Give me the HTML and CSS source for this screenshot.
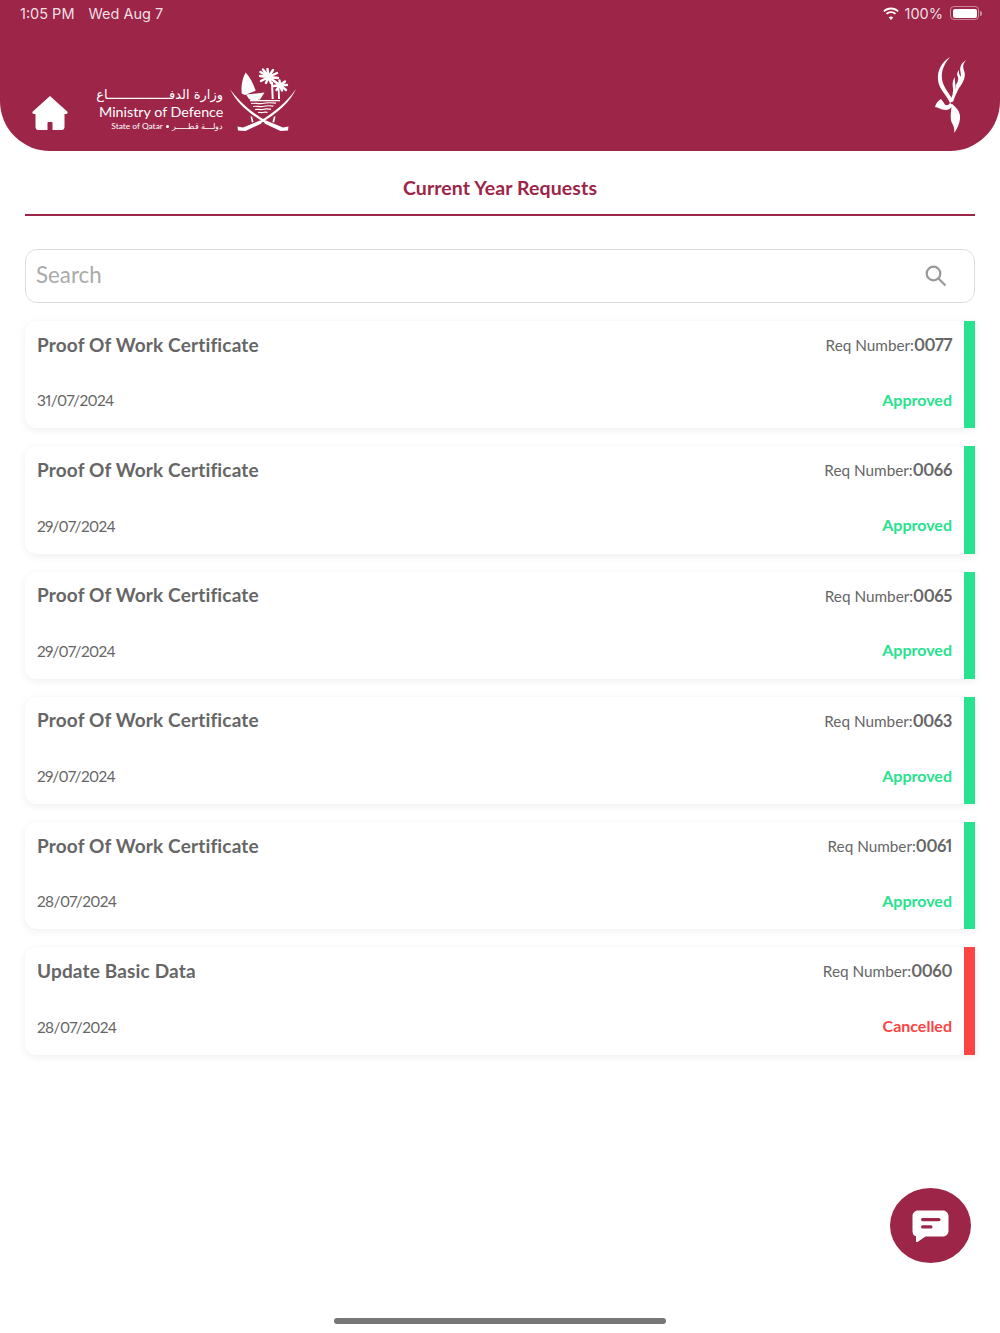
FILE: index.html
```html
<!DOCTYPE html>
<html lang="en">
<head>
<meta charset="utf-8">
<title>Current Year Requests</title>
<link rel="stylesheet" href="styles.css">
</head>
<body>
<div class="page">
  <header class="header">
    <div class="status">
      <div class="status-left"><span>1:05 PM</span><span>Wed Aug 7</span></div>
      <div class="status-right">
        <svg class="wifi" viewBox="0 0 18 13"><path d="M9 2.400c2.500 0 4.800 1 6.500 2.600l1.200-1.300C14.700 1.700 12 .6 9 .6S3.300 1.700 1.300 3.700L2.500 5C4.200 3.400 6.500 2.400 9 2.400z"/><path d="M9 6c1.500 0 2.900.6 3.900 1.500l1.200-1.300C12.800 5 11 4.200 9 4.200S5.200 5 3.900 6.200l1.200 1.300C6.100 6.600 7.500 6 9 6z"/><path d="M9 9.500c-.9 0-1.700.3-2.300.9L9 12.900l2.300-2.500c-.6-.6-1.400-.9-2.300-.9z"/></svg>
        <span>100%</span>
        <span class="battery"><span class="battery-fill"></span></span>
        <span class="battery-cap"></span>
      </div>
    </div>
    <div class="brand-row">
      <svg class="home" viewBox="0 0 36 34"><path d="M18 0 .8 15.500c-.9 1-.3 2.500 1 2.500h1.700v13c0 1.500 1 3 2.500 3h9.500v-7c0-.6.400-1 1-1h3c.6 0 1 .4 1 1v7H30c1.500 0 2.500-1.500 2.500-3V18h1.700c1.300 0 1.900-1.500 1-2.500z"/></svg>
      <div class="logo">
        <div class="logo-text">
          <div class="logo-ar">وزارة الدفــــــــــــــــاع</div>
          <div class="logo-en">Ministry of Defence</div>
          <div class="logo-sub"><span>State of Qatar</span><span class="dot"></span><span dir="rtl">دولــــة قطــــــر</span></div>
        </div>
        <svg class="emblem" viewBox="230 68 66 64">
          <path class="w" d="M245.700 72.500C242 79 241 86 241.700 93.500L245 95 255.700 90.700C253 83 250 77 245.700 72.500z"/>
          <path class="w" d="M246 94.500 264.500 92.500 260 99.500 253 100.700 249 99z"/>
          <path class="w" d="M271 82h2l.7 17h-2zM277.800 88h1.700l.5 11h-2z"/>
          <g class="frond">
            <path d="M268.500 77 260 76M268.500 77 260.500 72M268.500 77 263 69.500M268.500 77 267.500 69M268.500 77 273 70M268.500 77 277 73M268.500 77 278 78M268.500 77 261 81M268.500 77 266 83M268.500 77 271 83M268.500 77 275.500 82"/>
            <path d="M280 85 273.500 86M280 85 274.500 81.500M280 85 279.500 80.500M280 85 285 81.500M280 85 287 85M280 85 286 90M280 85 282 90.500M280 85 276.500 90"/>
          </g>
          <path class="w" d="M250 100h30v1.300h-30z"/>
          <path class="s" d="M251 103.500c4-1 7 .8 11 0s9-1 14-.3"/>
          <path class="s" d="M253 106.500c3.500-1 6.500.8 9.500 0s7-1 11-.3"/>
          <path class="s" d="M255 109.500c3-.8 5 .6 7.500 0s5.500-.8 8.500-.2"/>
          <path class="s" d="M258 112.500c2-.6 3 .5 4.500 0s3-.6 5-.1"/>
          <path class="w" d="M230 89C238 100 250 112 268 122L266.500 124C248 113 236 102 230 89z"/>
          <path class="w" d="M296 89C288 100 276 112 258 122L259.500 124C278 113 290 102 296 89z"/>
          <path class="w" d="M266 120.500 283 127.500 288.500 126.500 288 130.500 280.500 131 264.500 123.500zM260 120.500 243 127.500 237.500 126.500 238 130.500 245.500 131 261.500 123.500z"/>
          <path class="w" d="M250.500 116.500h1.600l1.500 5.500-1.800.4zM275.500 116.500h-1.600l-1.500 5.500 1.800.4z"/>
        </svg>
      </div>
      <svg class="crest" viewBox="935 57 34 76">
        <path class="w" d="M950 57C942 62 937 70 938 80 939 90 947 95 950 103L953 101C950 93 943 88 942 79 941 71 944 64 950 57z"/>
        <path class="w" d="M935 107C936 103 938 101 941 99L944 103C945 106 948 106 950 103L953 105C951 109 948 110 945 110 941 110 938 107 935 107z"/>
        <path class="w" d="M952 104C956 107 961 112 960 119 959 125 957 129 954 133 955 128 953 125 951.500 122 950 118 951 110 952 104z"/>
        <path class="w" d="M966.500 60C962 64 963 68 964.500 72 966 78 962 84 959 88 957 92 955 96 953 102L950.500 100C952 95 955 90 957.500 85 960.500 80 961.500 76 960.500 72 959.500 67 961 63 966.500 60z"/>
        <path class="w" d="M959 70C956.500 73 957 75 958 77 959 80 957 83 955.500 86L957.500 88C961.500 84 962.500 80 961 77 959.500 75 958.500 73 959 70z"/>
        <path class="w" d="M955 77C952 81 952.500 85 953 88 953.300 90 953 92 952.500 94L955 94.500C956.500 90 955.500 87 955.300 84 955.100 81 954.500 79 955 77z"/>
      </svg>
    </div>
  </header>

  <main class="content">
    <h1 class="title">Current Year Requests</h1>
    <div class="search">
      <span class="search-ph">Search</span>
      <svg class="search-icon" viewBox="0 0 22 22"><circle cx="8.500" cy="8.500" r="6.800"/><path d="M13.500 13.500 20.500 20.500"/></svg>
    </div>
    <div class="list">
      <article class="card approved">
        <div class="card-body">
          <div class="row"><span class="name">Proof Of Work Certificate</span><span class="num">Req Number:<b>0077</b></span></div>
          <div class="row"><span class="date">31/07/2024</span><span class="state">Approved</span></div>
        </div>
      </article>
      <article class="card approved">
        <div class="card-body">
          <div class="row"><span class="name">Proof Of Work Certificate</span><span class="num">Req Number:<b>0066</b></span></div>
          <div class="row"><span class="date">29/07/2024</span><span class="state">Approved</span></div>
        </div>
      </article>
      <article class="card approved">
        <div class="card-body">
          <div class="row"><span class="name">Proof Of Work Certificate</span><span class="num">Req Number:<b>0065</b></span></div>
          <div class="row"><span class="date">29/07/2024</span><span class="state">Approved</span></div>
        </div>
      </article>
      <article class="card approved">
        <div class="card-body">
          <div class="row"><span class="name">Proof Of Work Certificate</span><span class="num">Req Number:<b>0063</b></span></div>
          <div class="row"><span class="date">29/07/2024</span><span class="state">Approved</span></div>
        </div>
      </article>
      <article class="card approved">
        <div class="card-body">
          <div class="row"><span class="name">Proof Of Work Certificate</span><span class="num">Req Number:<b>0061</b></span></div>
          <div class="row"><span class="date">28/07/2024</span><span class="state">Approved</span></div>
        </div>
      </article>
      <article class="card cancelled">
        <div class="card-body">
          <div class="row"><span class="name">Update Basic Data</span><span class="num">Req Number:<b>0060</b></span></div>
          <div class="row"><span class="date">28/07/2024</span><span class="state">Cancelled</span></div>
        </div>
      </article>
    </div>
  </main>

  <button class="fab" type="button" aria-label="Chat">
    <svg viewBox="0 0 37 32"><path class="w" d="M6 .5h25c3 0 5.500 2.500 5.500 5.500v15c0 3-2.500 5.500-5.500 5.500H13.500l-8 5.500c-.8.500-1.500 0-1.500-.8v-4.900C2 26 .5 24 .5 21V6C.5 3 3 .5 6 .5z"/><rect class="m" x="9" y="8" width="19.500" height="3.200" rx="1.600"/><rect class="m" x="9" y="15.300" width="11.500" height="3.200" rx="1.600"/></svg>
  </button>
  <div class="home-bar"></div>
</div>
</body>
</html>
```

FILE: styles.css
```css
* { box-sizing: border-box; }
html, body { margin: 0; padding: 0; background: #fff; }
body { font-family: Lato, "Noto Sans", sans-serif; color: #666; font-variant-numeric: proportional-nums; }
.page { position: relative; width: 1000px; height: 1333px; overflow: hidden; display: flex; flex-direction: column; }

.header { flex: none; height: 151px; background: #9c2548; border-radius: 0 0 50px 50px; color: #fff; padding: 0 18px 0 20px; display: flex; flex-direction: column; }
.status { height: 27px; display: flex; justify-content: space-between; align-items: center; font-family: Inter, sans-serif; font-size: 14.500px; color: #f1dfe4; padding-bottom: 1px; }
.status-left { display: flex; gap: 14px; }
.status-right { display: flex; align-items: center; }
.wifi { width: 18px; height: 13px; fill: #fff; margin-right: 5px; }
.battery { width: 29px; height: 14px; margin-left: 7px; border: 1.500px solid rgba(255,255,255,.45); border-radius: 4px; padding: 1.500px; display: block; }
.battery-fill { display: block; height: 100%; background: #fff; border-radius: 2px; }
.battery-cap { width: 2px; height: 5px; margin-left: 1px; background: rgba(255,255,255,.5); border-radius: 0 2px 2px 0; }

.brand-row { flex: 1; display: flex; align-items: flex-start; margin-right: 13px; }
.home { width: 36px; height: 34px; fill: #fff; margin: 69px 0 0 12px; flex: none; }
.logo { display: flex; margin: 41px 0 0 31px; align-items: flex-start; }
.logo-text { width: 124px; margin-top: 19px; color: #fff; text-align: right; }
.logo-ar { font-family: "DejaVu Sans", sans-serif; font-size: 13px; line-height: 16px; direction: rtl; white-space: nowrap; text-align: right; }
.logo-en { font-family: Lato, sans-serif; font-size: 14.300px; line-height: 17px; white-space: nowrap; }
.logo-sub { font-family: Lato, sans-serif; font-size: 8.400px; line-height: 12px; display: flex; justify-content: flex-end; align-items: center; gap: 3px; white-space: nowrap; }
.dot { width: 3px; height: 3px; background: #fff; border-radius: 50%; }
.emblem { width: 66px; height: 64px; margin-left: 7px; flex: none; }
.w { fill: #fff; }
.s { fill: none; stroke: #fff; stroke-width: 1.200; }
.frond { fill: none; stroke: #fff; stroke-width: 2.400; stroke-linecap: round; }
.crest { width: 34px; height: 76px; margin: 30px 0 0 auto; flex: none; }

.content { padding: 0 25px; display: flex; flex-direction: column; }
.title { margin: 0; height: 65px; border-bottom: 2px solid #9c2548; font-size: 19.500px; letter-spacing: .1px; line-height: 74px; font-weight: 700; text-align: center; color: #9c2548; }
.search { margin-top: 33px; height: 54px; border: 1.500px solid #ddd; border-radius: 12px; display: flex; align-items: center; justify-content: space-between; padding: 0 27px 0 10px; }
.search-ph { font-size: 22.300px; line-height: 26px; color: #aaa; margin-bottom: 2px; }
.search-icon { width: 22px; height: 22px; fill: none; stroke: #999; stroke-width: 2.200; }

.list { margin-top: 18px; display: flex; flex-direction: column; gap: 18px; }
.card { height: 107.300px; display: flex; background: #fff; border-radius: 12px 0 0 12px; box-shadow: 0 2px 8px rgba(0,0,0,.07); border-right: 11px solid #27e28e; }
.card.cancelled { border-right-color: #fd4444; }
.card-body { flex: 1; padding: 11px 12px 17px 12px; display: flex; flex-direction: column; justify-content: space-between; }
.row { display: flex; justify-content: space-between; align-items: center; height: 24px; }
.name { font-size: 19px; letter-spacing: .16px; font-weight: 700; color: #666; }
.num { font-size: 15.300px; color: #666; margin-top: 2px; }
.num b { font-size: 16.500px; letter-spacing: -.4px; }
.date { font-size: 15.400px; letter-spacing: -.6px; color: #666; margin-top: 2px; }
.state { font-size: 16px; font-weight: 700; }
.approved .state { color: #27e28e; }
.cancelled .state { color: #fd4444; }

.fab { position: absolute; left: 890px; top: 1188px; width: 81px; height: 75px; border: 0; padding: 0; border-radius: 50%; background: #9c2548; display: flex; align-items: center; justify-content: center; }
.fab svg { width: 37px; height: 32px; }
.m { fill: #9c2548; }
.home-bar { position: absolute; left: 334px; top: 1318px; width: 332px; height: 6px; border-radius: 3px; background: #777; }
```
